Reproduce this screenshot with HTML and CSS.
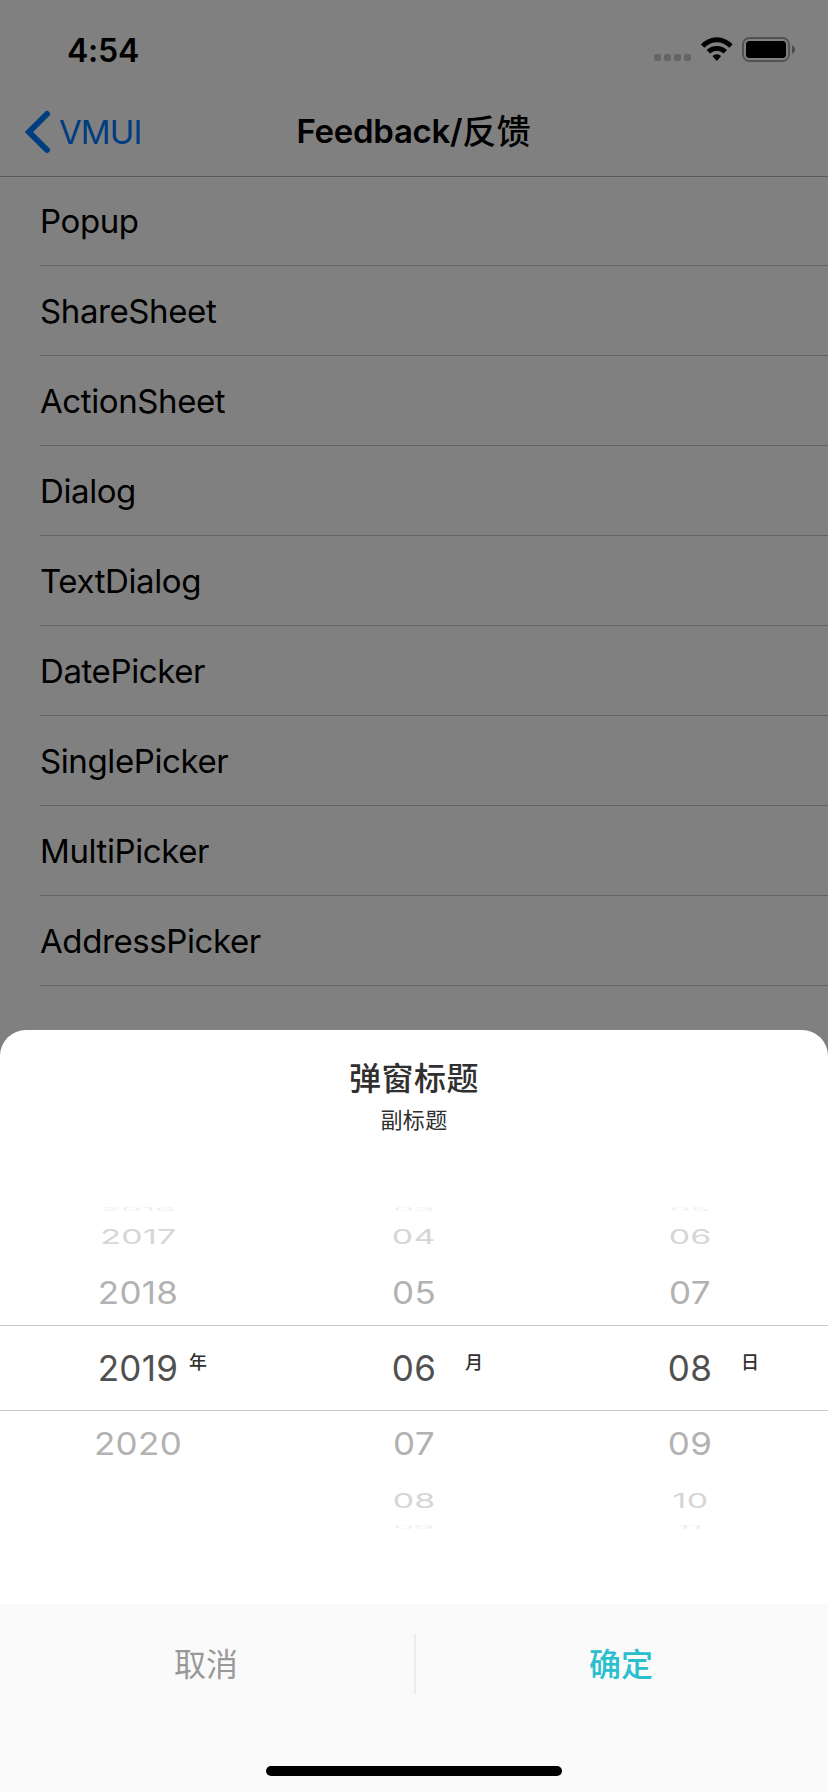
FILE: index.html
```html
<!DOCTYPE html>
<html lang="zh-CN">
<head>
<meta charset="utf-8">
<title>Feedback/反馈</title>
<link rel="stylesheet" href="styles.css">
</head>
<body>
<div class="screen">
  <header class="header">
    <div class="status">
      <span class="time">4:54</span>
      <div class="indicators">
        <div class="signal"><i></i><i></i><i></i><i></i></div>
        <svg class="wifi" width="32" height="24" viewBox="0 0 32 24">
          <path d="M0 7.5A20.9 20.9 0 0 1 31.6 7.5L28.2 10.8A16.6 16.6 0 0 0 3.4 10.8Z"/>
          <path d="M5.6 13A14.7 14.7 0 0 1 26 13L22.5 16.5A9.4 9.4 0 0 0 9.1 16.5Z"/>
          <path d="M11.4 19A6.7 6.7 0 0 1 20.2 19L15.8 24Z"/>
        </svg>
        <svg class="battery" width="54" height="25" viewBox="0 0 54 25">
          <rect x="1" y="1" width="46" height="23" rx="6.5" fill="none" stroke="#a4a4a4" stroke-width="2"/>
          <rect x="4" y="4" width="40" height="17" rx="3.5"/>
          <path d="M50 8.3Q53 9.6 53 12.5T50 16.7Z" fill="#969696"/>
        </svg>
      </div>
    </div>
    <nav class="nav">
      <a class="back">
        <svg width="26" height="44" viewBox="0 0 26 44"><path d="M22 4L4 22L22 40" fill="none" stroke="#007aff" stroke-width="6" stroke-linecap="round" stroke-linejoin="miter"/></svg>
        <span>VMUI</span>
      </a>
      <h1 class="title">Feedback/<span class="cjk">反馈</span></h1>
    </nav>
  </header>
  <ul class="list">
    <li><span>Popup</span></li>
    <li><span>ShareSheet</span></li>
    <li><span>ActionSheet</span></li>
    <li><span>Dialog</span></li>
    <li><span>TextDialog</span></li>
    <li><span>DatePicker</span></li>
    <li><span>SinglePicker</span></li>
    <li><span>MultiPicker</span></li>
    <li><span>AddressPicker</span></li>
  </ul>
  <div class="mask"></div>
  <section class="sheet">
    <div class="sheet-head">
      <h2>弹窗标题</h2>
      <p>副标题</p>
    </div>
    <div class="picker">
      <div class="wheel">
        <div class="edge"><span>2016</span></div>
        <div class="far"><span>2017</span></div>
        <div class="near"><span>2018</span></div>
        <div class="current"><span>2019</span><em>年</em></div>
        <div class="near"><span>2020</span></div>
      </div>
      <div class="wheel">
        <div class="edge"><span>03</span></div>
        <div class="far"><span>04</span></div>
        <div class="near"><span>05</span></div>
        <div class="current"><span>06</span><em>月</em></div>
        <div class="near"><span>07</span></div>
        <div class="far"><span>08</span></div>
        <div class="edge"><span>09</span></div>
      </div>
      <div class="wheel">
        <div class="edge"><span>05</span></div>
        <div class="far"><span>06</span></div>
        <div class="near"><span>07</span></div>
        <div class="current"><span>08</span><em>日</em></div>
        <div class="near"><span>09</span></div>
        <div class="far"><span>10</span></div>
        <div class="edge"><span>11</span></div>
      </div>
    </div>
    <footer class="footer">
      <div class="actions">
        <button class="cancel">取消</button>
        <div class="divider"></div>
        <button class="confirm">确定</button>
      </div>
      <div class="home"></div>
    </footer>
  </section>
</div>
</body>
</html>
```
FILE: styles.css
```css
* { box-sizing: border-box; margin: 0; padding: 0; }
body { background: #fff; font-family: Inter, "Noto Sans CJK SC", sans-serif; color: #000; }
.screen { position: relative; width: 828px; height: 1792px; overflow: hidden; }

.header { height: 177px; border-bottom: 1px solid #b2b2b2; }
.status { height: 88px; display: flex; justify-content: space-between; padding: 0 33px 0 67px; }
.time { font-size: 32px; font-weight: 600; line-height: 40px; margin-top: 31px; letter-spacing: -0.2px; }
.indicators { display: flex; align-items: flex-start; padding-top: 37px; }
.signal { display: flex; gap: 3px; margin: 17px 10px 0 0; }
.signal i { width: 7px; height: 7px; border-radius: 2px; background: #c9c9c9; }
.wifi { margin-right: 9px; }
.battery { margin-right: -1px; }

.nav { height: 88px; display: grid; grid-template-columns: 1fr auto 1fr; align-items: center; }
.back { display: flex; align-items: center; padding-left: 25px; color: #007aff; font-size: 33px; font-weight: 400; line-height: 40px; }
.back span { margin-left: 8px; letter-spacing: -0.9px; }
.title { font-size: 33px; font-weight: 600; line-height: 40px; margin-top: -2px; letter-spacing: -0.3px; }
.cjk { font-family: "Noto Sans CJK SC", sans-serif; font-weight: 500; font-size: 34px; letter-spacing: 0.6px; vertical-align: -1px; line-height: 36px; }

.list { list-style: none; margin-top: -1px; padding-left: 40px; }
.list li { height: 90px; border-bottom: 1px solid #c8c8c8; display: flex; align-items: center; font-size: 33px; letter-spacing: -0.4px; }

.mask { position: absolute; inset: 0; background: rgba(0, 0, 0, 0.498); }

.sheet { position: absolute; left: 0; right: 0; bottom: 0; height: 762px; display: flex; flex-direction: column; background: #fff; border-radius: 26px 26px 0 0; overflow: hidden; }
.sheet-head { height: 177px; padding-top: 22px; text-align: center; color: #303030; }
.sheet-head h2 { font-size: 32px; font-weight: 500; line-height: 48px; letter-spacing: 0.5px; font-family: "Noto Sans CJK SC", sans-serif; }
.sheet-head p { font-size: 22px; line-height: 36px; letter-spacing: 0.4px; font-family: "Noto Sans CJK SC", sans-serif; }

.picker { height: 322px; display: grid; grid-template-columns: repeat(3, 276px); }
.wheel { display: flex; flex-direction: column; font-size: 35px; font-weight: 400; line-height: 42px; }
.wheel div { display: flex; align-items: center; justify-content: center; flex-shrink: 0; }
.wheel span { display: block; letter-spacing: 0.3px; }
.edge { height: 5px; color: #efefef; }
.edge span { transform: translateY(-1px) scale(0.92, 0.12); }
.edge:last-child span { transform: scale(0.92, 0.12); }
.far { height: 48px; color: #d6d6d6; }
.far span { transform: scale(0.97, 0.58); }
.near { height: 65px; color: #b2b2b2; }
.near span { transform: translateY(-0.5px) scaleY(0.9); }
.wheel .current { position: relative; height: 86px; border: solid #c8c8c8; border-width: 1px 0; color: #505050; }
.current em { position: absolute; left: 189px; top: 22px; font: 500 18px/27px "Noto Sans CJK SC", sans-serif; color: #303030; }

.footer { margin-top: auto; height: 188px; background: #fafafa; display: flex; flex-direction: column; align-items: center; justify-content: space-between; padding-bottom: 16px; }
.actions { width: 100%; height: 120px; display: grid; grid-template-columns: 414px 2px 1fr; align-items: center; }
.actions button { border: 0; background: none; margin-top: -4px; padding-right: 2px; font: 400 32px/46px "Noto Sans CJK SC", sans-serif; color: #999; }
.actions .confirm { font-weight: 500; color: #29bfce; }
.divider { height: 60px; background: #ececec; }
.home { width: 296px; height: 10px; border-radius: 5px; background: #000; }
```
